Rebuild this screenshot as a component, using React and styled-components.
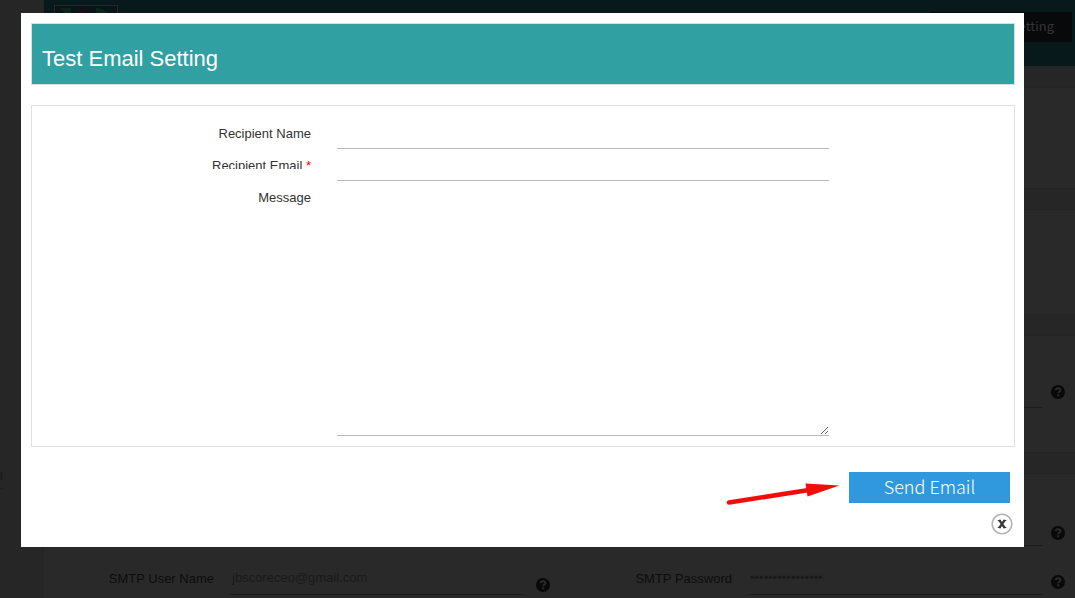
import React, { useState } from "react";
import styled, { createGlobalStyle } from "styled-components";

const GlobalStyle = createGlobalStyle`
  * {
    box-sizing: border-box;
  }
  body {
    margin: 0;
    background: #262626;
    color: #333333;
    font-family: "Liberation Sans", Arial, sans-serif;
    font-size: 13px;
    overflow: hidden;
  }
`

const Page = styled.div`
  display: flex;
  height: 100vh;
  overflow: hidden;
`

const Sidebar = styled.nav`
  flex: none;
  width: 44px;
  padding-top: 467px;
  background: #262626;
  border-right: 1px solid #232323;
`

const SideLink = styled.a`
  display: block;
  width: 3px;
  height: 22px;
  line-height: 18px;
  overflow: hidden;
  direction: rtl;
  color: #1a1a1a;
  text-decoration: none;
  border-bottom: 1px solid #202020;
`

const Main = styled.main`
  flex: 1;
  min-width: 0;
  background: #292929;
`

const TopBar = styled.header`
  display: flex;
  justify-content: space-between;
  align-items: flex-start;
  height: 66px;
  padding: 5px 3px 0 10px;
  background: #07191b;
`

const SettingTab = styled.a`
  width: 142px;
  height: 30px;
  margin-top: 7px;
  padding-right: 18px;
  background: #08090a;
  color: #353535;
  font-family: "Noto Sans CJK SC", "Open Sans", sans-serif;
  font-size: 13px;
  line-height: 28px;
  text-align: right;
  text-decoration: none;
`

const SectionBar = styled.div`
  height: 22px;
  background: #262626;
  border-top: 1px solid #242424;
  border-bottom: 1px solid #242424;
`

const Section = styled.section`
  height: ${(props) => props.$height}px;
  padding-top: ${(props) => props.$top || 0}px;
`

const SettingsRow = styled.div`
  display: grid;
  grid-template-columns: 178fr 294fr 22px 178fr 295fr 14px;
  column-gap: 8px;
  align-items: end;
  height: 49px;
  padding-right: 10px;
`

const SettingLabel = styled.label`
  padding: 0 8px 8px 0;
  color: #0d0d0d;
  line-height: 16px;
  text-align: right;
  white-space: nowrap;
`

const SettingInput = styled.input`
  width: 100%;
  min-width: 0;
  height: 32px;
  padding: 0 2px 2px;
  border: 0;
  border-bottom: 1px solid #1c1c1c;
  background: transparent;
  color: #1a1a1a;
  font: inherit;
  outline: none;
`

const HelpButton = styled.button`
  display: block;
  width: 14px;
  height: 14px;
  margin: 0 auto ${(props) => props.$bottom}px;
  padding: 0;
  border: 0;
  background: none;
`

const FieldWithHelp = styled.div`
  display: grid;
  grid-template-columns: 1fr 14px;
  column-gap: 8px;
  align-items: end;
  width: 327px;
  height: 32px;
  margin-left: auto;
  padding-right: 10px;
`

const Backdrop = styled.div`
  position: fixed;
  inset: 0;
  padding: 13px 51px 52px 21px;
`

const Modal = styled.div`
  padding: 10px 9px 12px 10px;
  background: #ffffff;
`

const ModalHeader = styled.h1`
  margin: 0 0 20px;
  padding: 20px 10px 10px;
  border: 1px solid #dddddd;
  background: #30a0a2;
  color: #ffffff;
  font-size: 22px;
  font-weight: 400;
  line-height: 30px;
`

const Fields = styled.div`
  display: grid;
  grid-template-columns: 279fr 492fr 159fr;
  column-gap: 26px;
  padding: 11px 0 10px;
  border: 1px solid #e0e0e0;
`

const Label = styled.label`
  grid-column: 1;
  height: ${(props) => (props.$short ? 20 : 28)}px;
  padding-top: 9px;
  overflow: hidden;
  line-height: 16px;
  text-align: right;
`

const Required = styled.span`
  color: #ff0000;
`

const Input = styled.input`
  width: 100%;
  height: 32px;
  padding: 0 4px;
  border: 0;
  border-bottom: 1px solid #b9b9b9;
  background: transparent;
  font: inherit;
  outline: none;
`

const TextArea = styled.textarea`
  display: block;
  width: 100%;
  height: 255px;
  padding: 8px 4px;
  border: 0;
  border-bottom: 1px solid #b9b9b9;
  background: transparent;
  font: inherit;
  outline: none;
  resize: both;
`

const Actions = styled.div`
  display: flex;
  justify-content: flex-end;
  gap: 8px;
  margin-top: 25px;
  padding-right: 5px;
`

const SendButton = styled.button`
  width: 161px;
  height: 31px;
  padding: 0 0 3px;
  border: 0;
  background: #3099dd;
  color: #ffffff;
  font-family: "Noto Sans CJK SC", "Open Sans", sans-serif;
  font-size: 18px;
  font-weight: 200;
  line-height: 28px;
`

const CloseButton = styled.button`
  display: block;
  width: 22px;
  height: 22px;
  margin: 10px 2px 0 auto;
  padding: 0;
  border: 0;
  background: none;
`

const ArrowSvg = styled.svg`
  flex: none;
  overflow: visible;
`

const Help = ({ bottom }) => (
  <HelpButton type="button" aria-label="Help" $bottom={bottom}>
    <svg width="14" height="14" viewBox="0 0 14 14">
      <circle cx="7" cy="7" r="7" fill="#08090a" />
      <path d="M4.6 5.3C4.7 3.9 5.7 3.2 7 3.2c1.4 0 2.5.8 2.5 2 0 1.6-2.2 1.6-2.2 3" fill="none" stroke="#2b2b2b" strokeWidth="1.9" />
      <rect x="6.2" y="9.3" width="2" height="2" fill="#2b2b2b" />
    </svg>
  </HelpButton>
)

const Logo = () => (
  <svg width="64" height="30" viewBox="0 0 64 30">
    <rect x="0.5" y="0.5" width="63" height="29" fill="#081416" stroke="#222a2b" />
    <path d="M6 3h11v14z" fill="#0b2418" />
    <path d="M22 4h11l-5 8z" fill="#200b1e" />
    <path d="M42 3c8 0 14 5 16 12H42z" fill="#0b2418" />
  </svg>
)

const Arrow = () => (
  <ArrowSvg width="115" height="31" viewBox="0 0 115 31">
    <path d="M3 30.5L83 18" stroke="#f20d0d" strokeWidth="4.6" strokeLinecap="round" />
    <path d="M79.5 11.5L113.5 13.5L81.5 24.5Z" fill="#f20d0d" />
  </ArrowSvg>
)

export default function App() {
  const [open, setOpen] = useState(true)

  return (
    <>
      <GlobalStyle />
      <Page>
        <Sidebar>
          <SideLink href="#">t</SideLink>
        </Sidebar>
        <Main>
          <TopBar>
            <Logo />
            <SettingTab href="#">Setting</SettingTab>
          </TopBar>
          <SectionBar />
          <Section $height={100} />
          <SectionBar />
          <Section $height={104} />
          <SectionBar />
          <Section $height={116} $top={40}>
            <FieldWithHelp>
              <SettingInput aria-label="Sender" />
              <Help bottom={9} />
            </FieldWithHelp>
          </Section>
          <SectionBar />
          <Section $height={140} $top={40}>
            <FieldWithHelp>
              <SettingInput aria-label="SMTP Port" />
              <Help bottom={6} />
            </FieldWithHelp>
            <SettingsRow>
              <SettingLabel htmlFor="smtp-user">SMTP User Name</SettingLabel>
              <SettingInput id="smtp-user" defaultValue="jbscoreceo@gmail.com" />
              <Help bottom={3} />
              <SettingLabel htmlFor="smtp-password">SMTP Password</SettingLabel>
              <SettingInput id="smtp-password" type="password" defaultValue="smtppassword1234" />
              <Help bottom={6} />
            </SettingsRow>
          </Section>
        </Main>
      </Page>

      {open && (
        <Backdrop>
          <Modal role="dialog" aria-labelledby="modal-title">
            <ModalHeader id="modal-title">Test Email Setting</ModalHeader>
            <Fields>
              <Label htmlFor="name">Recipient Name</Label>
              <Input id="name" />
              <Label htmlFor="email" $short>
                Recipient Email <Required>*</Required>
              </Label>
              <Input id="email" />
              <Label htmlFor="message">Message</Label>
              <TextArea id="message" />
            </Fields>
            <Actions>
              <Arrow />
              <SendButton type="button">Send Email</SendButton>
            </Actions>
            <CloseButton type="button" aria-label="Close" onClick={() => setOpen(false)}>
              <svg width="22" height="22" viewBox="0 0 22 22">
                <circle cx="11" cy="11" r="9.8" fill="#ffffff" stroke="#b5b5b5" strokeWidth="1.6" />
                <path d="M8.2 7L13.8 15M13.8 7L8.2 15" stroke="#3a3a3a" strokeWidth="2.2" />
                <path d="M6.8 7.5h3M12.3 7.5h3M6.8 14.5h3M12.3 14.5h3" stroke="#3a3a3a" strokeWidth="1" />
              </svg>
            </CloseButton>
          </Modal>
        </Backdrop>
      )}
    </>
  )
}
